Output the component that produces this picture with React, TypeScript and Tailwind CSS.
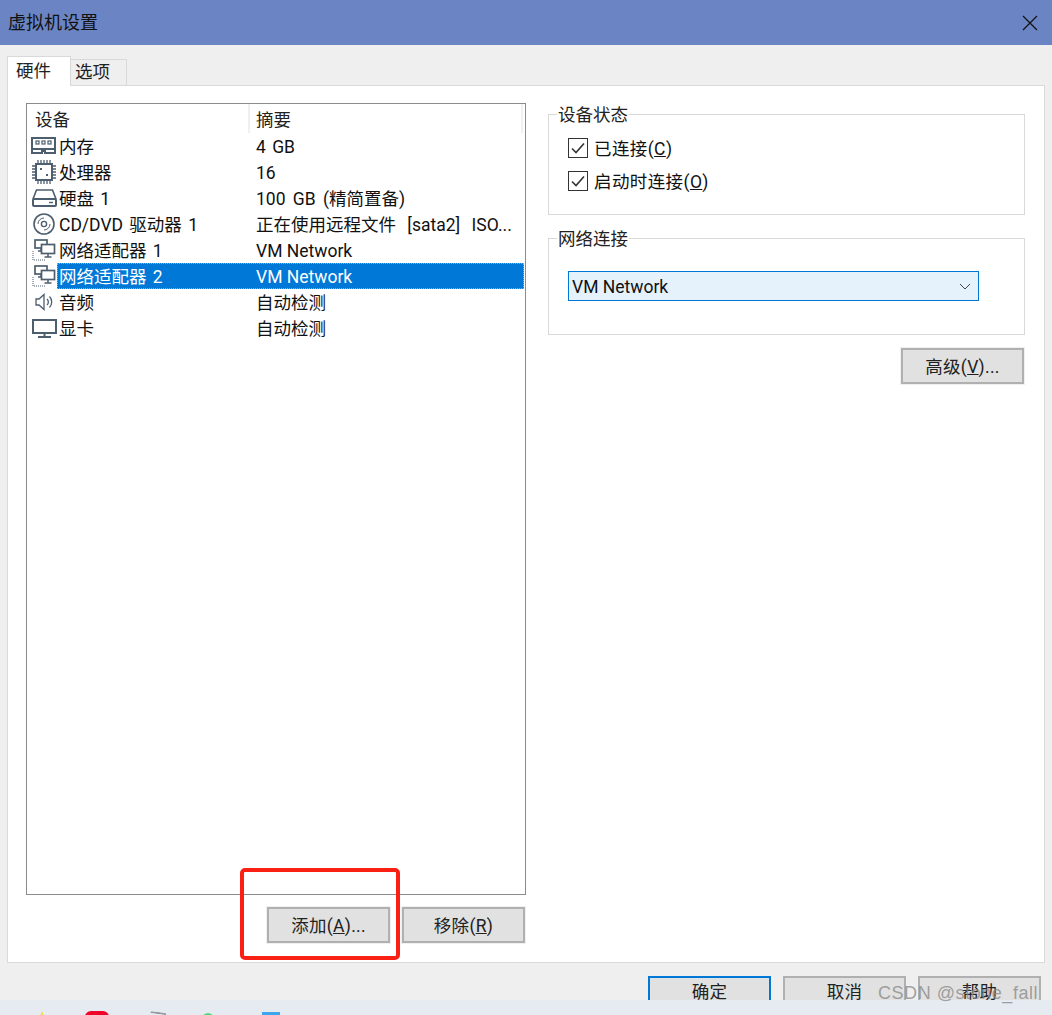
import type { ReactNode } from 'react'

const FONT = 'font-["Roboto","Noto_Sans_CJK_SC",sans-serif]'

// Hardware list icons, all drawn in the same slate colour
const MemoryIcon = () => (
  <svg width="26" height="18" viewBox="0 0 26 18" fill="none" stroke="#4d5f6e" strokeWidth="2">
    <rect x="1" y="1" width="23" height="11" />
    <rect x="5" y="4" width="3" height="3" strokeWidth="1.2" />
    <rect x="11" y="4" width="3" height="3" strokeWidth="1.2" />
    <rect x="17" y="4" width="3" height="3" strokeWidth="1.2" />
    <path d="M1 12v4h10v-2h3v2h10v-4" />
  </svg>
)

const CpuIcon = () => (
  <svg width="24" height="24" viewBox="0 0 24 24" fill="none" stroke="#4d5f6e">
    <rect x="4" y="4" width="16" height="16" strokeWidth="2" />
    <path d="M6 0v3M9 0v3M12 0v3M15 0v3M18 0v3M6 21v3M9 21v3M12 21v3M15 21v3M18 21v3M0 6h3M0 9h3M0 12h3M0 15h3M0 18h3M21 6h3M21 9h3M21 12h3M21 15h3M21 18h3" strokeWidth="1.3" />
    <rect x="8" y="8" width="2" height="2" fill="#4d5f6e" stroke="none" />
    <rect x="14" y="14" width="2" height="2" fill="#4d5f6e" stroke="none" />
  </svg>
)

const DiskIcon = () => (
  <svg width="25" height="18" viewBox="0 0 25 18" fill="none" stroke="#4d5f6e" strokeWidth="1.6">
    <path d="M1 10 4.5 1h16L24 10" />
    <rect x="1" y="10" width="23" height="7" rx="1" strokeWidth="2" />
    <path d="M17 13.5h4" strokeWidth="1.4" />
  </svg>
)

const DiscIcon = () => (
  <svg width="22" height="22" viewBox="0 0 22 22" fill="none" stroke="#4d5f6e">
    <circle cx="11" cy="11" r="10" strokeWidth="1.6" />
    <circle cx="11" cy="11" r="2.6" strokeWidth="1.4" />
    <path d="M5 11a6 6 0 0 1 6-6M17 11a6 6 0 0 1-6 6" strokeWidth="1" />
  </svg>
)

const NetworkIcon = () => (
  <svg width="24" height="22" viewBox="0 0 24 22" fill="none" stroke="#4d5f6e">
    <rect x="3" y="1" width="12" height="8" strokeWidth="1.7" fill="#fff" />
    <path d="M9 9v3M6 12h5" strokeWidth="1.4" />
    <rect x="9.5" y="5.5" width="13" height="9" strokeWidth="1.7" fill="#fff" />
    <path d="M16 14.5V18M12.5 18h7" strokeWidth="1.5" />
    <path d="M1 12v9h13" strokeWidth="1" strokeDasharray="1 1" />
  </svg>
)

const SpeakerIcon = () => (
  <svg width="18" height="18" viewBox="0 0 18 18" fill="none" stroke="#4d5f6e" strokeWidth="1.3">
    <path d="M1 6v6h3l5 4.5v-15L4 6z" />
    <path d="M12 6a4 4 0 0 1 0 6M14.5 3.5a8 8 0 0 1 0 11" />
  </svg>
)

const MonitorIcon = () => (
  <svg width="25" height="19" viewBox="0 0 25 19" fill="none" stroke="#4d5f6e">
    <rect x="1" y="1" width="23" height="13" strokeWidth="2" />
    <path d="M12.5 15v2" strokeWidth="2" />
    <path d="M6 18h13" strokeWidth="2" />
  </svg>
)

const devices = [
  { name: '内存', summary: '4 GB', spacing: '[word-spacing:2px]', icon: <MemoryIcon /> },
  { name: '处理器', summary: '16', spacing: '', icon: <CpuIcon /> },
  { name: '硬盘 1', summary: '100 GB (精简置备)', spacing: '[word-spacing:3px]', icon: <DiskIcon /> },
  { name: 'CD/DVD 驱动器 1', summary: '正在使用远程文件 [sata2] ISO...', spacing: '[word-spacing:7px]', icon: <DiscIcon /> },
  { name: '网络适配器 1', summary: 'VM Network', spacing: '', icon: <NetworkIcon /> },
  { name: '网络适配器 2', summary: 'VM Network', spacing: '', icon: <NetworkIcon />, selected: true },
  { name: '音频', summary: '自动检测', spacing: '', icon: <SpeakerIcon /> },
  { name: '显卡', summary: '自动检测', spacing: '', icon: <MonitorIcon /> },
]

const Button = ({ children, className = '' }: { children: ReactNode; className?: string }) => (
  <div className={`flex h-[36px] w-[123px] items-center justify-center border-2 bg-[#e1e1e1] text-[17.5px] tracking-[0.3px] text-[#222] ring-1 ring-[#f0f0f0] ${className || 'border-[#b0b0b0] pt-[2px]'}`}>
    {children}
  </div>
)

const Group = ({ title, className, children }: { title: string; className: string; children: ReactNode }) => (
  <div className={`relative border border-[#d9d9d9] ${className}`}>
    <span className="absolute left-[8px] top-[-13px] bg-white px-[1px] text-[17.5px] leading-[26px] text-[#222]">{title}</span>
    {children}
  </div>
)

const Check = ({ children }: { children: ReactNode }) => (
  <div className="flex h-[20px] items-center gap-[6px] text-[17.5px] tracking-[0.4px] text-[#111]">
    <div className="flex h-[20px] w-[20px] items-center justify-center border border-[#333] bg-white">
      <svg width="14" height="12" viewBox="0 0 14 12" fill="none" stroke="#333" strokeWidth="1.6">
        <path d="M1 6.5 5 10.5 13 1.5" />
      </svg>
    </div>
    <span className="pt-[2px]">{children}</span>
  </div>
)

export default function App() {
  return (
    <div className={`relative flex h-[1015px] w-[1052px] flex-col overflow-hidden bg-[#efefef] ${FONT}`}>
      {/* Title bar */}
      <div className="flex h-[45px] shrink-0 items-center justify-between bg-[#6b84c3] pl-[8px] pr-[14px]">
        <span className="text-[18px] text-[#111]">虚拟机设置</span>
        <svg width="16" height="16" viewBox="0 0 16 16" stroke="#111" strokeWidth="1.2">
          <path d="M1 1 15 15M15 1 1 15" />
        </svg>
      </div>

      {/* Tabs */}
      <div className="relative z-10 flex h-[40px] shrink-0 items-end pl-[7px] text-[17.5px] text-[#222]">
        <div className="mb-[-1px] h-[30px] w-[64px] border border-b-0 border-[#d9d9d9] bg-white pl-[8px] pt-[1px] leading-[26px]">硬件</div>
        <div className="h-[26px] w-[56px] border border-b-0 border-l-0 border-[#d9d9d9] pl-[4px] pt-[1px] leading-[22px]">选项</div>
      </div>

      {/* Panel */}
      <div className="mx-[7px] flex h-[878px] shrink-0 gap-[22px] border border-[#d9d9d9] bg-white pl-[18px] pr-[1px] pt-[17px]">
        <div className="w-[500px]">
          <div className="h-[792px] border border-[#8a8a8f] text-[17.5px] text-[#111]">
            <div className="flex h-[29px] items-center text-[#222]">
              <div className="ml-[8px] w-[213px] pt-[3px]">设备</div>
              <div className="flex h-full w-[275px] items-center border-x-2 border-[#f0f0f0] pl-[6px] pt-[3px]">摘要</div>
            </div>
            {devices.map((d) => (
              <div key={d.name} className="flex h-[26px] items-center">
                <div className="flex w-[30px] shrink-0 justify-center pl-[4px]">{d.icon}</div>
                <div
                  className={`flex h-full w-[467px] items-center pl-[2px] pt-[2px] ${
                    d.selected ? 'bg-[#0078d7] text-white outline-1 -outline-offset-1 outline-dotted outline-[#e8a04c]' : ''
                  }`}
                >
                  <span className="w-[197px] shrink-0 [word-spacing:2px]">{d.name}</span>
                  <span className={`whitespace-nowrap ${d.spacing}`}>{d.summary}</span>
                </div>
              </div>
            ))}
          </div>
          <div className="mt-[12px] flex justify-end gap-[12px] pr-[1px]">
            <Button>
              添加(<u>A</u>)...
            </Button>
            <Button>
              移除(<u>R</u>)
            </Button>
          </div>
        </div>

        <div className="w-[477px] pt-[11px]">
          <Group title="设备状态" className="flex h-[101px] flex-col gap-[13px] pl-[19px] pt-[23px]">
            <Check>
              已连接(<u>C</u>)
            </Check>
            <Check>
              启动时连接(<u>O</u>)
            </Check>
          </Group>
          <Group title="网络连接" className="mt-[23px] h-[97px] pl-[19px] pt-[32px]">
            <div className="flex h-[30px] w-[411px] items-center justify-between border border-[#0078d7] bg-[#e5f1fb] pl-[3px] pr-[7px] text-[17.5px] text-[#111]">
              <span className="pt-[2px]">VM Network</span>
              <svg width="12" height="7" viewBox="0 0 12 7" fill="none" stroke="#444" strokeWidth="1">
                <path d="M1 1 6 6 11 1" />
              </svg>
            </div>
          </Group>
          <div className="mt-[13px] flex justify-end pr-[1px]">
            <Button>
              高级(<u>V</u>)...
            </Button>
          </div>
        </div>
      </div>

      {/* Dialog buttons, cut off by the taskbar */}
      <div className="flex h-[37px] shrink-0 justify-end gap-[12px] pr-[11px] pt-[13px]">
        <Button className="border-[#0078d7] pb-[3px]">确定</Button>
        <Button className="border-[#b0b0b0] pb-[3px]">取消</Button>
        <Button className="border-[#b0b0b0] pb-[3px]">帮助</Button>
      </div>

      {/* Taskbar strip */}
      <div className="relative z-10 flex h-[15px] shrink-0 items-start overflow-hidden bg-[#e6ebf2] pl-[34px]">
        <svg width="16" height="15" viewBox="0 0 16 15" className="mt-[11px]">
          <path d="M8 0 10 5 16 6 11 10 8 15 5 10 0 6 6 5z" fill="#f7dc3c" />
        </svg>
        <div className="ml-[35px] mt-[11px] h-[10px] w-[24px] rounded-t-[6px] bg-[#f0052a]" />
        <div className="ml-[41px] mt-[12px] h-[6px] w-[16px] rotate-[8deg] rounded-t-[2px] border-t-2 border-[#8f9a9a]" />
        <div className="ml-[36px] mt-[13px] h-[8px] w-[12px] rounded-t-full bg-[#56d878]" />
        <div className="ml-[48px] mt-[12px] h-[6px] w-[18px] bg-[#3ea6ee]" />
      </div>

      {/* Annotation drawn over the screenshot */}
      <div className="absolute left-[240px] top-[868px] z-20 h-[92px] w-[160px] rounded-[5px] border-[4px] border-[#fa2014]" />

      {/* Watermark */}
      <div className='absolute left-[878px] top-[981px] z-20 whitespace-nowrap font-["Liberation_Sans",sans-serif] text-[18px] leading-[24px] tracking-[0.55px] text-[#8a8a8a]/80'>
        CSDN @stone_fall
      </div>
    </div>
  )
}
